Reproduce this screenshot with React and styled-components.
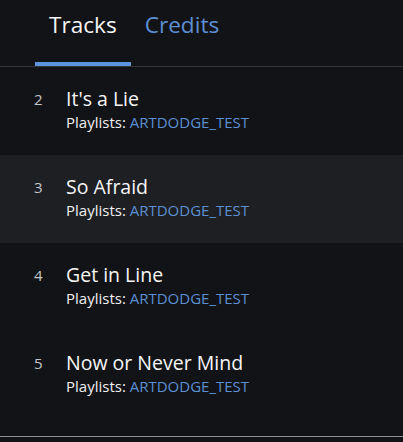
import React from "react";
import styled, { createGlobalStyle } from "styled-components";

const Global = createGlobalStyle`
  html, body { margin: 0; padding: 0; background: #121317; }
  body { font-family: "Open Sans", "Noto Sans", sans-serif; color: #f2f2f2; }
  * { box-sizing: border-box; }
`;

const Page = styled.div`
  width: 403px;
  height: 442px;
  background: #121317;
  overflow: hidden;
`;

const TabBar = styled.div`
  display: flex;
  padding-left: 35px;
  border-bottom: 1px solid #34363b;
`;

const Tab = styled.div`
  font-size: 22.6px;
  line-height: 33px;
  padding: 8px 14px 0;
  height: 66px;
  color: ${(p) => (p.$active ? "#f4f4f4" : "#5b8fd2")};
  border-bottom: 4px solid ${(p) => (p.$active ? "#5b93dc" : "transparent")};
`;

const List = styled.div`
  display: flex;
  flex-direction: column;
`;

const Row = styled.div`
  display: flex;
  align-items: flex-start;
  height: 88px;
  padding: 20px 0 0 34px;
  background: ${(p) => (p.$highlight ? "#1e1f23" : "transparent")};
`;

const Num = styled.div`
  width: 32px;
  font-size: 15px;
  line-height: 24px;
  color: #c4c5c8;
`;

const Info = styled.div`
  display: flex;
  flex-direction: column;
  gap: 2px;
`;

const Title = styled.div`
  font-size: 19.5px;
  line-height: 24px;
  color: #f6f6f6;
`;

const Meta = styled.div`
  font-size: 15px;
  line-height: 19px;
  color: #f0f0f0;
`;

const Link = styled.span`
  color: #5b8fd2;
`;

const Footer = styled.div`
  margin-top: 17px;
  border-top: 1px solid #8b9194;
`;

const tracks = [
  { n: 2, title: "It's a Lie" },
  { n: 3, title: "So Afraid", hl: true },
  { n: 4, title: "Get in Line" },
  { n: 5, title: "Now or Never Mind" },
];

export default function App() {
  return (
    <Page>
      <Global />
      <TabBar>
        <Tab $active>Tracks</Tab>
        <Tab>Credits</Tab>
      </TabBar>
      <List>
        {tracks.map((t) => (
          <Row key={t.n} $highlight={t.hl}>
            <Num>{t.n}</Num>
            <Info>
              <Title>{t.title}</Title>
              <Meta>
                Playlists: <Link>ARTDODGE_TEST</Link>
              </Meta>
            </Info>
          </Row>
        ))}
      </List>
      <Footer />
    </Page>
  );
}
